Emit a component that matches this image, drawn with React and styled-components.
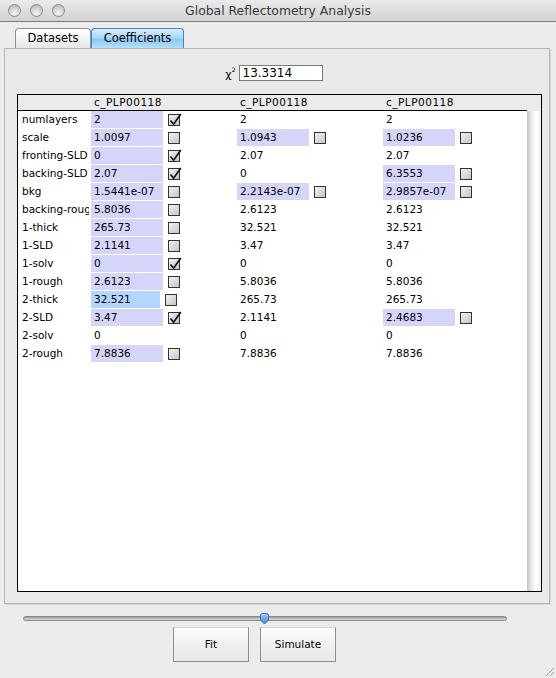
import React from "react";
import styled, { createGlobalStyle } from "styled-components";

const GlobalStyle = createGlobalStyle`
  html, body {
    margin: 0;
    padding: 0;
    background: #ececec;
  }
  body {
    font-family: "DejaVu Sans", "Liberation Sans", sans-serif;
    color: #000;
  }
`;

// one entry per row: label, then [value, highlight, checkbox] for each dataset
// highlight: "lav" = editable, "sel" = selected cell; checkbox: true / false / none
const ROWS = [
	["numlayers", [["2", "lav", true], ["2"], ["2"]]],
	["scale", [["1.0097", "lav", false], ["1.0943", "lav", false], ["1.0236", "lav", false]]],
	["fronting-SLD", [["0", "lav", true], ["2.07"], ["2.07"]]],
	["backing-SLD", [["2.07", "lav", true], ["0"], ["6.3553", "lav", false]]],
	["bkg", [["1.5441e-07", "lav", false], ["2.2143e-07", "lav", false], ["2.9857e-07", "lav", false]]],
	["backing-rough", [["5.8036", "lav", false], ["2.6123"], ["2.6123"]]],
	["1-thick", [["265.73", "lav", false], ["32.521"], ["32.521"]]],
	["1-SLD", [["2.1141", "lav", false], ["3.47"], ["3.47"]]],
	["1-solv", [["0", "lav", true], ["0"], ["0"]]],
	["1-rough", [["2.6123", "lav", false], ["5.8036"], ["5.8036"]]],
	["2-thick", [["32.521", "sel", false], ["265.73"], ["265.73"]]],
	["2-SLD", [["3.47", "lav", true], ["2.1141"], ["2.4683", "lav", false]]],
	["2-solv", [["0"], ["0"], ["0"]]],
	["2-rough", [["7.8836", "lav", false], ["7.8836"], ["7.8836"]]],
];

const DATASETS = ["c_PLP00118", "c_PLP00118", "c_PLP00118"];

const Window = styled.div`
	position: relative;
	width: 556px;
	height: 678px;
	background: #ececec;
	display: flex;
	flex-direction: column;
	overflow: hidden;
`;

const TitleBar = styled.div`
	height: 21px;
	border-bottom: 1px solid #7d7d7d;
	background: linear-gradient(#ebebeb, #d2d2d2);
	display: flex;
	align-items: center;
`;

const Lights = styled.div`
	width: 70px;
	display: flex;
	gap: 9px;
	padding-left: 8px;
	box-sizing: border-box;
`;

const Light = styled.span`
	width: 13px;
	height: 13px;
	box-sizing: border-box;
	border-radius: 50%;
	border: 1px solid #8c8c8c;
	background: radial-gradient(circle at 50% 75%, #f4f4f4 0%, #d0d0d0 55%, #a9a9a9 100%);
`;

const Title = styled.div`
	flex: 1;
	text-align: center;
	font-size: 12.4px;
	color: #3a3a3a;
`;

const Spacer = styled.div`
	width: 70px;
`;

const TabStrip = styled.div`
	display: flex;
	margin-top: 6px;
	padding-left: 15px;
	height: 20px;
`;

const Tab = styled.div`
	width: ${(p) => p.w}px;
	box-sizing: border-box;
	border: 1px solid ${(p) => (p.active ? "#4b7fd0" : "#8f8f8f")};
	border-bottom: none;
	border-radius: 4px 4px 0 0;
	background: ${(p) =>
		p.active
			? "linear-gradient(#d9eefd, #a9d7f8 45%, #8cc9f4 55%, #b5e0fa)"
			: "linear-gradient(#ffffff, #f4f4f4 50%, #e6e6e6)"};
	font-size: 11.5px;
	line-height: 19px;
	text-align: center;
`;

const Panel = styled.div`
	margin: 0 6px 0 4px;
	border: 1px solid #b4b4b4;
	box-shadow: 1px 1px 0 #d6d6d6;
	background: #e9e9e9;
	padding: 16px 0 11px;
	display: flex;
	flex-direction: column;
`;

const ChiRow = styled.div`
	display: flex;
	justify-content: center;
	align-items: center;
	gap: 3px;
	height: 16px;
	padding-right: 10px;
`;

const ChiLabel = styled.span`
	width: 14px;
	font-size: 11px;
	text-align: right;

	sup {
		font-size: 6px;
		vertical-align: 6px;
	}
`;

const ChiField = styled.div`
	width: 84px;
	height: 16px;
	box-sizing: border-box;
	border: 1px solid #7a7a7a;
	background: #fff;
	font-size: 12px;
	line-height: 14px;
	padding-left: 3px;
`;

const Table = styled.div`
	margin: 13px 7px 0 12px;
	height: 498px;
	box-sizing: border-box;
	border: 1px solid #000;
	background: #fff;
	display: flex;
	flex-direction: column;
`;

const HeaderRow = styled.div`
	display: flex;
	height: 16px;
	background: #ebebeb;
`;

const Columns = styled.div`
	display: grid;
	grid-template-columns: 73px 146px 146px 1fr;
`;

const HeaderCells = styled(Columns)`
	flex: 1;
	border-bottom: 1px solid #000;
`;

const HeaderCorner = styled.div`
	width: 14px;
`;

const HeaderText = styled.div`
	width: 72px;
	box-sizing: border-box;
	padding-left: 3px;
	overflow: hidden;
	white-space: nowrap;
	font-size: 10.5px;
	letter-spacing: 0.5px;
	line-height: 15px;
`;

const Body = styled.div`
	flex: 1;
	display: flex;
`;

const Rows = styled.div`
	flex: 1;
	overflow: hidden;
`;

const Row = styled(Columns)`
	height: 18px;
`;

const Label = styled.div`
	width: 71px;
	box-sizing: border-box;
	padding-left: 4px;
	overflow: hidden;
	white-space: nowrap;
	font-size: 10.5px;
	line-height: 17px;
`;

const DataCell = styled.div`
	display: flex;
	align-items: flex-start;
`;

const Value = styled.div`
	width: ${(p) => (p.hl === "sel" ? 69 : 72)}px;
	height: 17px;
	box-sizing: border-box;
	padding-left: 3px;
	overflow: hidden;
	white-space: nowrap;
	font-size: 10.5px;
	line-height: 17px;
	background: ${(p) =>
		p.hl === "lav" ? "#d5d5fa" : p.hl === "sel" ? "#b4d5fe" : "transparent"};
`;

const Box = styled.span`
	position: relative;
	width: 12px;
	height: 12px;
	box-sizing: border-box;
	margin: 3px 0 0 5px;
	border: 1px solid #333;
	background: linear-gradient(135deg, #f2f2f2, #d6d6d6 60%, #c6c6c6);

	svg {
		position: absolute;
		left: -1px;
		top: -3px;
	}
`;

const Scrollbar = styled.div`
	width: 14px;
	background: linear-gradient(90deg, #c2c2c2, #e2e2e2 25%, #f8f8f8 50%, #ffffff 70%, #eeeeee);
`;

const SliderWrap = styled.div`
	position: relative;
	margin: 9px 0 0 23px;
	width: 484px;
	height: 12px;
	padding-top: 3px;
	box-sizing: border-box;
`;

const Track = styled.div`
	height: 5px;
	box-sizing: border-box;
	border-radius: 3px;
	border: 1px solid #8a8a8a;
	background: linear-gradient(#9b9b9b, #c4c4c4 60%, #d8d8d8);
`;

const Thumb = styled.svg`
	position: absolute;
	left: 236px;
	top: 0;
`;

const ButtonRow = styled.div`
	display: flex;
	gap: 11px;
	margin-top: 2px;
	padding-left: 173px;
`;

const Button = styled.div`
	width: 76px;
	height: 35px;
	box-sizing: border-box;
	border: 1px solid #8f8f8f;
	border-top-color: #d4d4d4;
	background: linear-gradient(#fcfcfc, #f0f0f0 50%, #e8e8e8);
	font-size: 10.5px;
	line-height: 33px;
	text-align: center;
`;

const Grip = styled.svg`
	position: absolute;
	right: 1px;
	bottom: 1px;
`;

function Checkbox({ checked }) {
	return (
		<Box>
			{checked && (
				<svg width="15" height="15" viewBox="0 0 15 15">
					<path
						d="M2.5 8.5 L5.6 12.2 L12.8 2"
						fill="none"
						stroke="#111"
						strokeWidth="1.7"
						strokeLinejoin="miter"
					/>
				</svg>
			)}
		</Box>
	);
}

export default function App() {
	return (
		<>
			<GlobalStyle />
			<Window>
				<TitleBar>
					<Lights>
						<Light />
						<Light />
						<Light />
					</Lights>
					<Title>Global Reflectometry Analysis</Title>
					<Spacer />
				</TitleBar>

				<TabStrip>
					<Tab w={76}>Datasets</Tab>
					<Tab w={93} active>
						Coefficients
					</Tab>
				</TabStrip>

				<Panel>
					<ChiRow>
						<ChiLabel>
							χ<sup>2</sup>
						</ChiLabel>
						<ChiField>13.3314</ChiField>
					</ChiRow>

					<Table>
						<HeaderRow>
							<HeaderCells>
								<div />
								{DATASETS.map((d, i) => (
									<HeaderText key={i}>{d}</HeaderText>
								))}
							</HeaderCells>
							<HeaderCorner />
						</HeaderRow>
						<Body>
							<Rows>
								{ROWS.map(([label, cells]) => (
									<Row key={label}>
										<Label>{label}</Label>
										{cells.map(([v, hl, cb], i) => (
											<DataCell key={i}>
												<Value hl={hl}>{v}</Value>
												{cb !== undefined && <Checkbox checked={cb} />}
											</DataCell>
										))}
									</Row>
								))}
							</Rows>
							<Scrollbar />
						</Body>
					</Table>
				</Panel>

				<SliderWrap>
					<Track />
					<Thumb width="11" height="12" viewBox="0 0 11 12">
						<defs>
							<linearGradient id="thumbFill" x1="0" y1="0" x2="0" y2="1">
								<stop offset="0" stopColor="#a9d2fa" />
								<stop offset="0.5" stopColor="#6aa9ee" />
								<stop offset="1" stopColor="#3f86e0" />
							</linearGradient>
						</defs>
						<path
							d="M1.5 2.5 Q1.5 0.5 3.5 0.5 L7.5 0.5 Q9.5 0.5 9.5 2.5 L9.5 7 L5.5 11 L1.5 7 Z"
							fill="url(#thumbFill)"
							stroke="#3b6fb5"
						/>
					</Thumb>
				</SliderWrap>

				<ButtonRow>
					<Button>Fit</Button>
					<Button>Simulate</Button>
				</ButtonRow>

				<Grip width="12" height="12" viewBox="0 0 12 12">
					<path d="M3 11 L11 3 M7 11 L11 7" stroke="#9a9a9a" strokeWidth="1" />
				</Grip>
			</Window>
		</>
	);
}
